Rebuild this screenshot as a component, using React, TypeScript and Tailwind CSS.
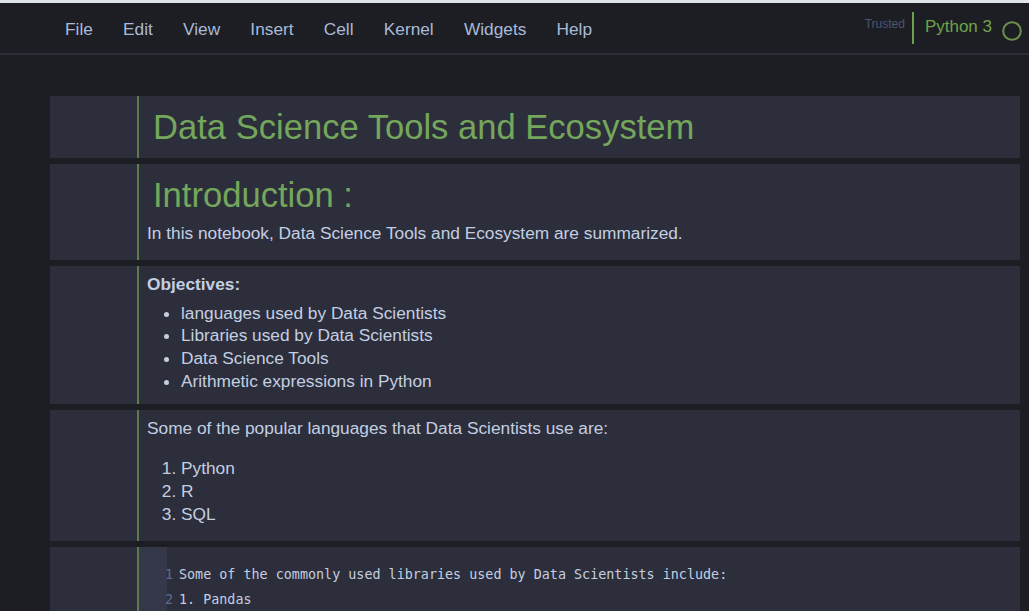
import React from "react";

const sans = { fontFamily: '"Liberation Sans", Arial, sans-serif' };

function Cell({ h, children, code }: { h: string; children: React.ReactNode; code?: boolean }) {
  return (
    <div className={`flex w-[970px] bg-[#2c2f3b] ${h}`}>
      <div className="w-[87px] shrink-0" />
      <div className="w-[2px] shrink-0 bg-[#5c7a4a]" />
      <div className={`relative flex-1 min-w-0 ${code ? "" : "pl-[8px]"}`}>{children}</div>
    </div>
  );
}

export default function App() {
  const menu = ["File", "Edit", "View", "Insert", "Cell", "Kernel", "Widgets", "Help"];
  return (
    <div className="w-[1029px] h-[611px] overflow-hidden bg-[#1d1e23]" style={sans}>
      <div className="h-[3px] bg-[#dfe4e9]" />
      <div className="flex h-[50px] border-b-2 border-[#2b2c35] box-content">
        <nav className="flex gap-[30.2px] ml-[65px] mt-[16px] self-start text-[17.3px] leading-[20px] text-[#a8bad8]">
          {menu.map((m) => (
            <span key={m}>{m}</span>
          ))}
        </nav>
        <div className="ml-auto flex items-start pr-[7px]">
          <span className="mt-[13px] text-[12px] leading-[16px] text-[#4c5570]">Trusted</span>
          <div className="mt-[9px] ml-[7px] w-[2px] h-[32px] bg-[#6fa04c]" />
          <span className="mt-[14px] ml-[11px] text-[17px] leading-[20px] text-[#6fa34a]">Python 3</span>
          <svg className="mt-[18px] ml-[10px]" width="20" height="20" viewBox="0 0 20 20">
            <circle cx="10" cy="10" r="8.8" fill="none" stroke="#6a8f4d" strokeWidth="2" />
          </svg>
        </div>
      </div>

      <div className="pt-[41px] pl-[50px] flex flex-col gap-[6px]">
        <Cell h="h-[62px]">
          <h1 className="pt-[12px] pl-[6px] text-[34.6px] leading-[38px] text-[#74a65b]">
            Data Science Tools and Ecosystem
          </h1>
        </Cell>

        <Cell h="h-[96px]">
          <h1 className="pt-[12px] pl-[6px] text-[34.6px] leading-[38px] text-[#74a65b]">Introduction :</h1>
          <p className="mt-[8px] text-[17.3px] leading-[22.7px] text-[#c4cee2]">
            In this notebook, Data Science Tools and Ecosystem are summarized.
          </p>
        </Cell>

        <Cell h="h-[138px]">
          <div className="pt-[7px] text-[17.3px] leading-[22.7px] text-[#c4cee2]">
            <p className="font-bold">Objectives:</p>
            <ul className="mt-[6px] list-disc pl-[34px]">
              <li>languages used by Data Scientists</li>
              <li>Libraries used by Data Scientists</li>
              <li>Data Science Tools</li>
              <li>Arithmetic expressions in Python</li>
            </ul>
          </div>
        </Cell>

        <Cell h="h-[131px]">
          <div className="pt-[7px] text-[17.3px] leading-[22.7px] text-[#c4cee2]">
            <p>Some of the popular languages that Data Scientists use are:</p>
            <ol className="mt-[17.7px] list-decimal pl-[34px]">
              <li>Python</li>
              <li>R</li>
              <li>SQL</li>
            </ol>
          </div>
        </Cell>

        <Cell h="h-[80px]" code>
          <div className="absolute left-0 top-0 bottom-0 w-[28px] bg-[#343849]" />
          <div
            className="relative pt-[15px] text-[13.4px] leading-[25px]"
            style={{ fontFamily: '"DejaVu Sans Mono", monospace' }}
          >
            <div className="flex">
              <span className="w-[34px] text-right text-[#5c6b8e]">1</span>
              <span className="ml-[6px] text-[#c5cee0] whitespace-pre">
                Some of the commonly used libraries used by Data Scientists include:
              </span>
            </div>
            <div className="flex">
              <span className="w-[34px] text-right text-[#5c6b8e]">2</span>
              <span className="ml-[6px] text-[#c5cee0] whitespace-pre">1. Pandas</span>
            </div>
          </div>
        </Cell>
      </div>
    </div>
  );
}
